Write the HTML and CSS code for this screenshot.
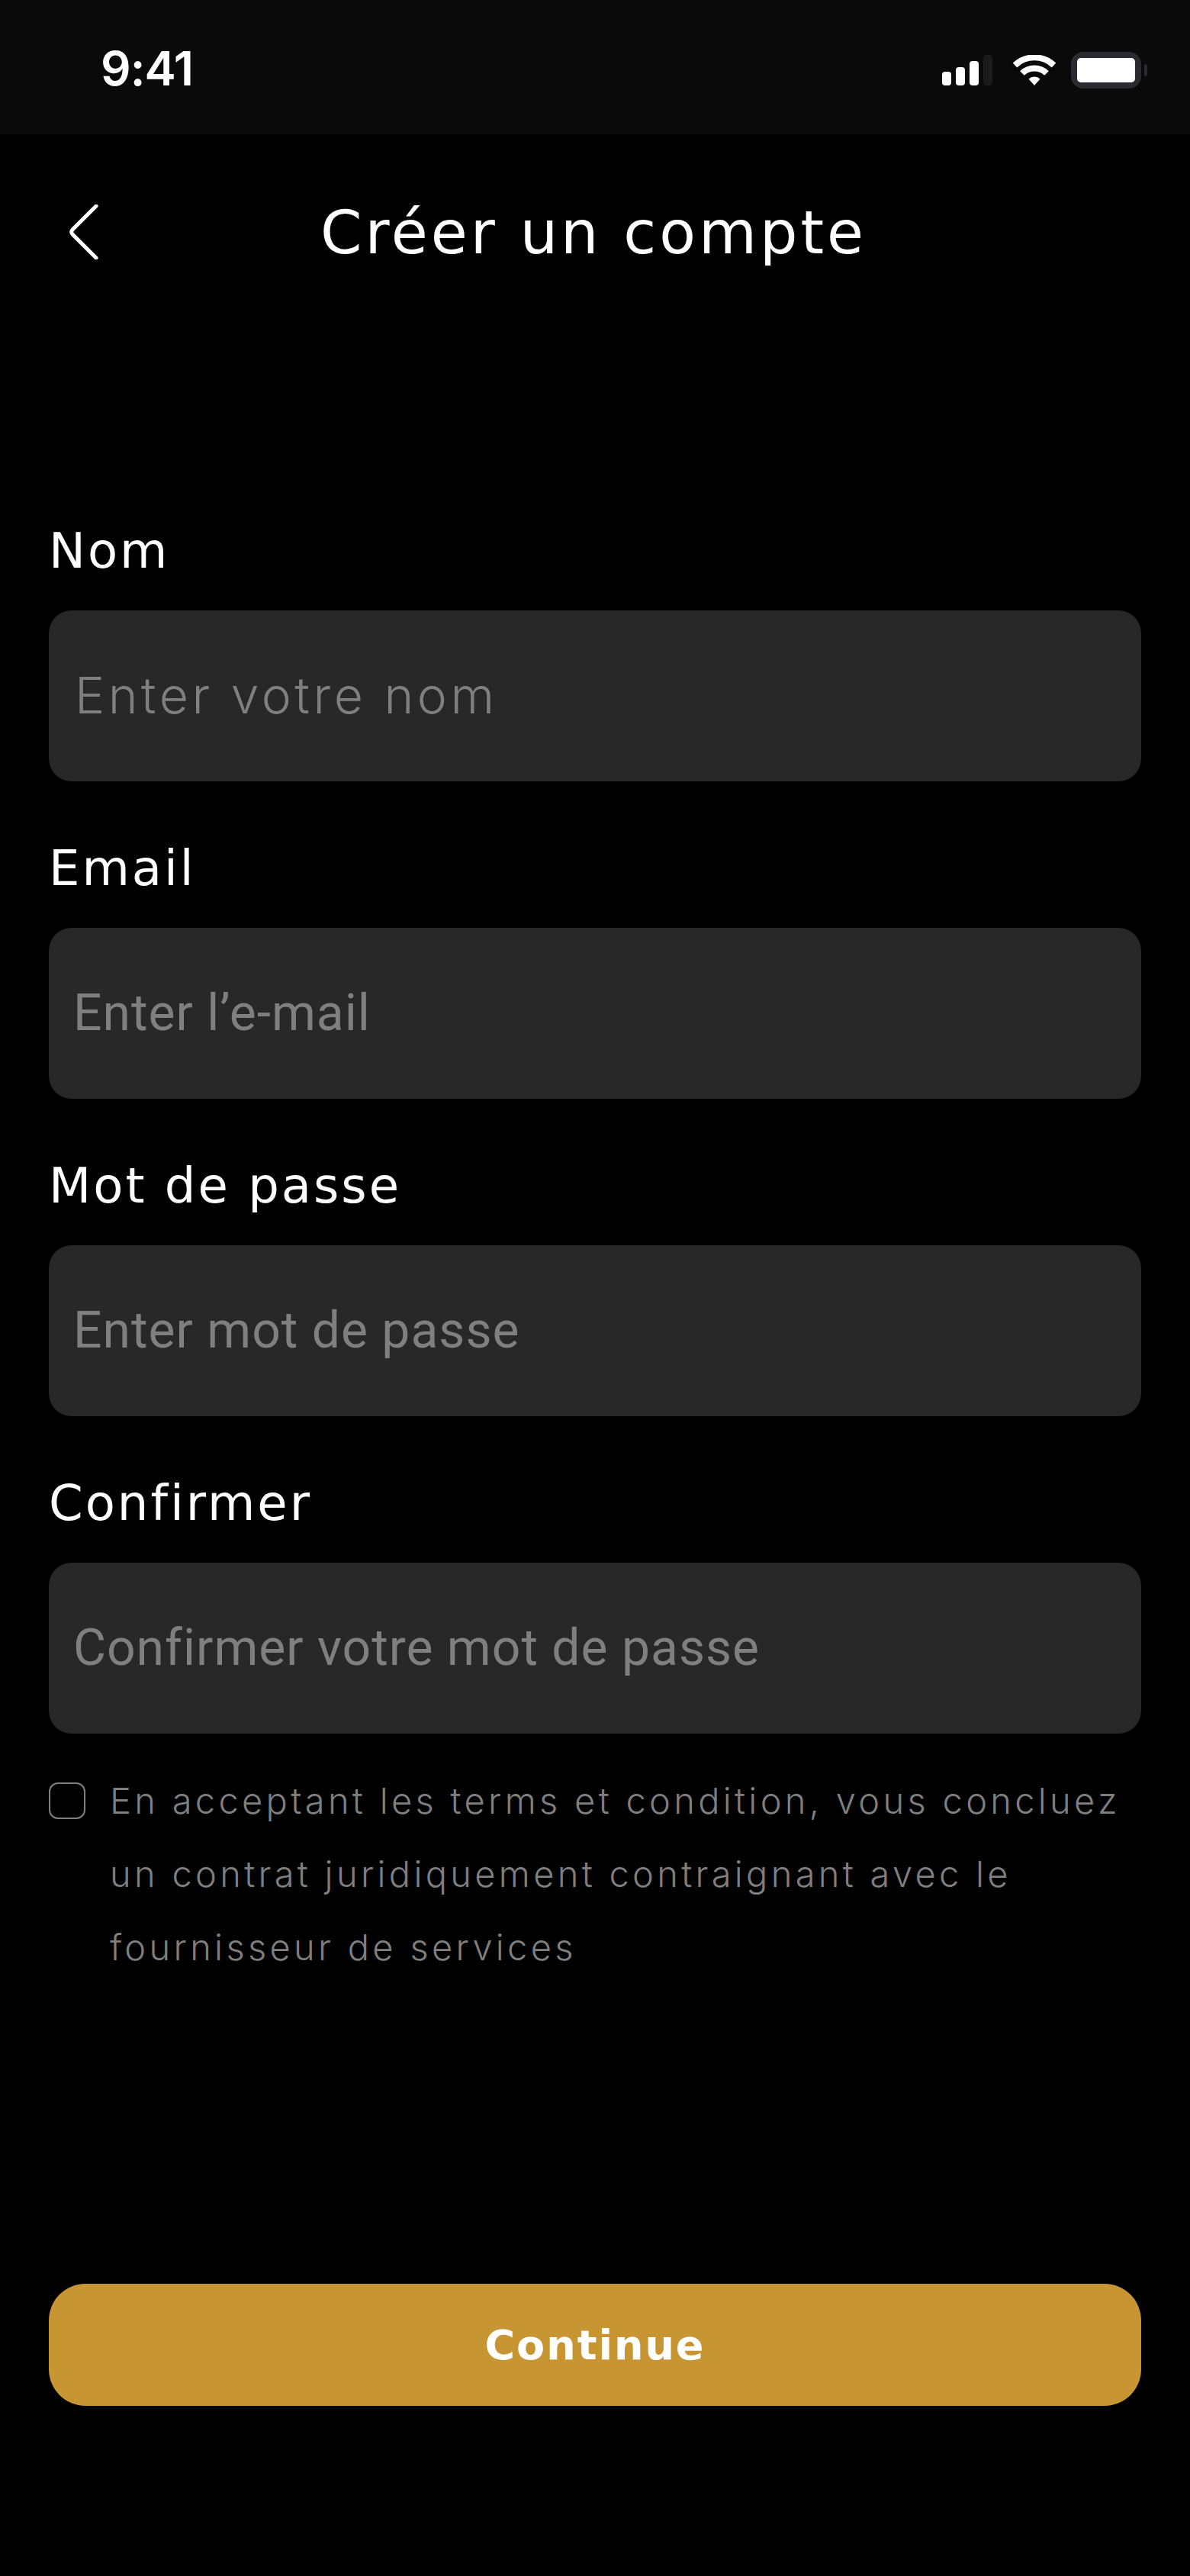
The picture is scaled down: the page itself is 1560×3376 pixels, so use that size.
FILE: index.html
```html
<!DOCTYPE html>
<html lang="fr">
<head>
    <meta charset="UTF-8">
    <meta name="viewport" content="width=device-width, initial-scale=1.0">
    <title>Créer un compte</title>
    <link rel="stylesheet" href="styles.css">
</head>
<body>
    <div class="status-bar">
        <span class="time">9:41</span>
        <div class="status-icons">
            <div class="signal">
                <span class="bar bar-1"></span>
                <span class="bar bar-2"></span>
                <span class="bar bar-3"></span>
                <span class="bar bar-4"></span>
            </div>
            <svg class="wifi" width="58" height="40" viewBox="0 0 58 40">
                <path d="M3.500 13.500A37 37 0 0 1 54.500 13.500" fill="none" stroke="#fff" stroke-width="8"/>
                <path d="M13 24A23 23 0 0 1 45 24" fill="none" stroke="#fff" stroke-width="8"/>
                <path d="M21.500 31.500A11 11 0 0 1 36.500 31.500L29 40Z" fill="#fff"/>
            </svg>
            <div class="battery">
                <div class="battery-level"></div>
            </div>
            <span class="battery-cap"></span>
        </div>
    </div>

    <header class="top-bar">
        <svg class="back" width="38" height="72" viewBox="0 0 38 72">
            <path d="M35 2L4 33Q1.500 36 4 39L35 70" fill="none" stroke="#fff" stroke-width="5" stroke-linecap="round"/>
        </svg>
        <h1>Créer un compte</h1>
    </header>

    <form class="form">
        <div class="field">
            <label for="nom">Nom</label>
            <input class="first" type="text" id="nom" placeholder="Enter votre nom">
        </div>
        <div class="field">
            <label for="email">Email</label>
            <input type="text" id="email" placeholder="Enter l’e-mail">
        </div>
        <div class="field">
            <label for="pass">Mot de passe</label>
            <input type="text" id="pass" placeholder="Enter mot de passe">
        </div>
        <div class="field">
            <label for="confirm">Confirmer</label>
            <input type="text" id="confirm" placeholder="Confirmer votre mot de passe">
        </div>

        <div class="terms">
            <span class="checkbox"></span>
            <p>En acceptant les terms et condition, vous concluez un contrat juridiquement contraignant avec le fournisseur de services</p>
        </div>

        <button type="button" class="continue">Continue</button>
    </form>
</body>
</html>
```

FILE: styles.css
```css
body {
    margin: 0;
    padding: 0;
    background-color: #000;
    color: #fff;
    font-family: 'DejaVu Sans', sans-serif;
}
.status-bar {
    height: 176px;
    box-sizing: border-box;
    padding: 56px 56px 0 132px;
    background-color: #0a0a0a;
    display: flex;
    justify-content: space-between;
    align-items: flex-start;
}
.time {
    font-family: 'Inter', sans-serif;
    font-size: 62px;
    line-height: 68px;
    font-weight: 600;
    letter-spacing: -1px;
}
.status-icons {
    display: flex;
    align-items: flex-end;
    margin-top: 16px;
    height: 40px;
}
.signal {
    display: flex;
    align-items: flex-end;
    gap: 6px;
    margin-right: 26px;
}
.bar {
    width: 12px;
    border-radius: 4px;
    background-color: #fff;
}
.bar-1 { height: 18px; }
.bar-2 { height: 24px; }
.bar-3 { height: 32px; }
.bar-4 { height: 40px; background-color: #1a1a1a; }
.wifi {
    display: block;
    margin-right: 19px;
}
.battery {
    width: 92px;
    height: 48px;
    margin-bottom: -4px;
    box-sizing: border-box;
    border: 8px solid #2a2a30;
    border-radius: 16px;
}
.battery-level {
    height: 100%;
    background-color: #fff;
    border-radius: 5px;
}
.battery-cap {
    width: 4px;
    height: 16px;
    margin: 0 0 12px 4px;
    background-color: #2a2a30;
    border-radius: 0 4px 4px 0;
}
.top-bar {
    display: flex;
    align-items: center;
    height: 96px;
    margin-top: 80px;
    padding-left: 91px;
}
.back {
    display: block;
    flex-shrink: 0;
}
h1 {
    margin: 2px 0 0 291px;
    font-size: 78px;
    line-height: 96px;
    font-weight: 400;
    letter-spacing: 4px;
    white-space: nowrap;
}
.form {
    margin: 328px 64px 0;
    display: flex;
    flex-direction: column;
    gap: 72px;
}
.field label {
    display: block;
    height: 80px;
    margin-bottom: 40px;
    font-size: 64px;
    line-height: 84px;
    letter-spacing: 3px;
}
.field input {
    display: block;
    width: 100%;
    height: 224px;
    box-sizing: border-box;
    padding: 0 32px 2px;
    background-color: #282828;
    border: none;
    border-radius: 30px;
    outline: none;
    font-family: 'Roboto', sans-serif;
    font-size: 66px;
    letter-spacing: 1px;
    color: #fff;
}
.field input::placeholder {
    color: #7f7f7f;
    opacity: 1;
}
.field input.first {
    font-family: 'Inter', sans-serif;
    font-weight: 300;
    font-size: 66px;
    padding-left: 34px;
    letter-spacing: 4.500px;
}
.terms {
    display: flex;
    align-items: flex-start;
    gap: 32px;
    margin-top: -32px;
}
.checkbox {
    flex-shrink: 0;
    box-sizing: border-box;
    width: 48px;
    height: 48px;
    margin-top: 24px;
    border: 2px solid #7f7f7f;
    border-radius: 12px;
}
.terms p {
    margin: 0;
    font-family: 'Inter', sans-serif;
    font-size: 47px;
    line-height: 96px;
    font-weight: 300;
    letter-spacing: 4.300px;
    color: #7f7f7f;
}
.continue {
    width: 100%;
    height: 160px;
    margin-top: 321px;
    background-color: #c79632;
    color: #fff;
    border: none;
    border-radius: 48px;
    font-family: 'DejaVu Sans', sans-serif;
    font-size: 54px;
    font-weight: 700;
    letter-spacing: 2px;
    cursor: pointer;
}
```
